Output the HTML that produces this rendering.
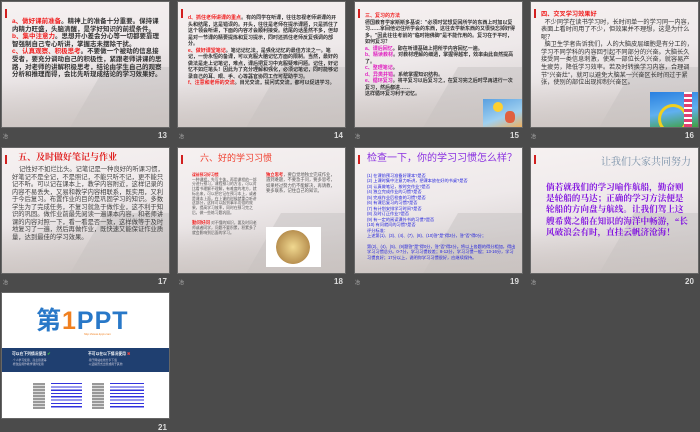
<!DOCTYPE html>
<html><head><meta charset="utf-8"><style>
*{margin:0;padding:0;box-sizing:border-box}
body{width:700px;height:431px;background:#4b4b4b;position:relative;overflow:hidden;font-family:"Liberation Sans","Noto Sans CJK SC",sans-serif}
.s{position:absolute;width:167px;height:125px;overflow:hidden;background:linear-gradient(170deg,#f6f1f1 0%,#eee9ea 45%,#dcd6d6 75%,#cfc9c8 100%);box-shadow:0 0 0 1px #666}
.s:before{content:"";position:absolute;right:-20px;bottom:-30px;width:110px;height:90px;background:rgba(200,196,196,.55);transform:skewX(-30deg)}
.s:after{content:"";position:absolute;left:0;right:0;bottom:0;height:45px;background:linear-gradient(180deg,rgba(230,225,222,0),rgba(200,192,188,.6))}
.s.w:before,.s.w:after{display:none}
.bar{position:absolute;left:3px;top:7px;width:2px;height:9px;background:#d21f1f;z-index:2}
.t{position:absolute;z-index:3;line-height:1.25;color:#333}
.n{position:absolute;color:#ddd;font-size:8px;font-weight:bold}
.m{position:absolute;color:#bbb;font-size:5px}
.r{color:#f02020;font-weight:bold}
.p{color:#e020c0;font-weight:bold}
.b{color:#2222dd}
</style></head><body>

<!-- 13 -->
<div class="s" style="left:2px;top:2px"><div class="bar"></div>
<div class="t" style="left:10px;top:16px;width:152px;font-size:6.5px;line-height:1.17;font-weight:bold"><span class="r">a、做好课前准备</span>。精神上的准备十分重要。保持课内精力旺盛，头脑清醒，是学好知识的前提条件。<br><span class="r">b、集中注意力</span>。思想开小差会分心等一切都要靠理智强制自己专心听讲，掌握志未摆除干扰。<br><span class="r">c、认真观察、积极思考</span>。不要做一个被动的信息接受者，要充分调动自己的积极性，紧跟老师讲课的思路，对老师的讲解积极思考，结论由学生自己的观察分析和推理而得，会比先听现成结论的学习效果好。</div></div>
<div class="m" style="left:3px;top:133px">冶</div><div class="n" style="left:158px;top:131px">13</div>

<!-- 14 -->
<div class="s" style="left:178px;top:2px"><div class="bar"></div>
<div class="t" style="left:10px;top:13px;width:150px;font-size:5px;line-height:1.3;font-weight:bold"><span class="r">d、抓住老师讲课的重点</span>。有的同学在听课，往往忽视老师讲课的开头和结尾，这是错误的。开头，往往是老师在提示课题，只是抓住了这个领会听讲，下面的内容才会顺利接受。结尾的话虽然不多，但却是对一节课的精要提炼和复习提示，同时还抓住老师反复强调的部分。<br><span class="r">e、做好课堂笔记</span>。笔记记忆法，是强化记忆的最佳方法之一。笔记，一份永恒的备课，可以克服大脑记忆方面的限制。当然，最好的做法是走上记笔记，难点，课后把复习中克服疑难问题。记住，好记忆不如烂笔头！因此为了充分理解和强化，必须记笔记，同时能够记录自己的耳、眼、手、心等器官协同工作可帮助学习。<br><span class="r">f、注意和老师的交流</span>。目光交流，提问式交流，都可以促进学习。</div></div>
<div class="m" style="left:179px;top:133px">冶</div><div class="n" style="left:334px;top:131px">14</div>

<!-- 15 -->
<div class="s" style="left:355px;top:2px"><div class="bar"></div>
<div class="t" style="left:10px;top:11px;width:152px;font-size:5px;line-height:1.3;font-weight:bold"><span class="r">三、复习的方法</span><br>德国教育学家斯斯多基说："必须时常想复回所学的东西上时加以复习……拿回他记住所学会的东西，这往去学新东西的又很快忘掉好得多。"因此往往考前的"临时抱佛脚"是不能作用的。复习在于平时，如何复习？<br><span class="p">a、课后回忆</span>。即在听课基础上把所学内容回忆一遍。<br><span class="p">b、精读教材</span>。对教材理解的细透，掌握得越牢，效率由此自然提高了。<br><span class="p">c、整理笔记</span>。<br><span class="p">d、异类并错</span>。系统掌握知识结构。<br><span class="p">e、循环复习</span>。将平复习以后复习之，在复习完之后时早再进行一次复习，然后都进……<br>这样循环复习利于记忆。</div>
<div style="position:absolute;left:128px;top:97px;width:39px;height:28px;background:linear-gradient(160deg,#5aa0e0,#9fd0f0 60%,#f0b060);z-index:4"><div style="position:absolute;left:10px;top:3px;width:10px;height:10px;background:#ffd030;border-radius:50%"></div><div style="position:absolute;left:22px;top:12px;width:10px;height:12px;background:#e06040;border-radius:40%"></div></div></div>
<div class="m" style="left:355px;top:133px">冶</div><div class="n" style="left:510px;top:131px">15</div>

<!-- 16 -->
<div class="s" style="left:531px;top:2px"><div class="bar"></div>
<div class="t" style="left:10px;top:9px;width:154px;font-size:6.2px;line-height:1.22"><span class="r">四、交叉学习效果好</span><br>&nbsp;&nbsp;不少同学在读书学习时，长时间单一的学习同一内容，表面上看时间用了不少，但效果并不理想，这是为什么呢？<br>&nbsp;&nbsp;脑卫生学者告诉我们，人的大脑皮层细胞是有分工的，学习不同学科的内容回引起不同部分的兴奋。大脑长久接受同一类信息刺激，使某一部位长久兴奋，就容易产生疲劳，降低学习效率。若及时转换学习内容，合理调节"兴奋灶"，就可以避免大脑某一兴奋区长时间过于紧张，使别的部位出现抑制兴奋区。</div>
<div style="position:absolute;left:119px;top:90px;width:48px;height:35px;background:linear-gradient(170deg,#2a80e0,#60b0f0 55%,#40a040);z-index:4"><div style="position:absolute;left:8px;top:12px;width:30px;height:30px;border:3px solid #f0d020;border-radius:50%;border-bottom-color:transparent"></div><div style="position:absolute;left:34px;top:0;width:8px;height:35px;background:repeating-linear-gradient(0deg,#e04070 0 3px,#fff 3px 5px)"></div></div></div>
<div class="m" style="left:531px;top:133px">冶</div><div class="n" style="left:685px;top:131px">16</div>

<!-- 17 -->
<div class="s" style="left:2px;top:148px"><div class="bar"></div>
<div class="t" style="left:16px;top:4px;font-size:9px;font-weight:bold;color:#e02020;font-family:'Liberation Serif','Noto Serif CJK SC',serif">五、及时做好笔记与作业</div>
<div class="t" style="left:10px;top:18px;width:152px;font-size:6.3px;line-height:1.2;color:#444">&nbsp;&nbsp;&nbsp;&nbsp;记性好不如烂比头。记笔记是一种良好的听课习惯，好笔记不是全记，不是照记，不能只听不记，更不能只记不听。可以记在课本上，教学内容附近，这样记录的内容不易丢失，又易和教学内容相联系，既实用，又利于今后复习。布置作业的目的是巩固学习的知识。多数学生为了完成任务，不复习就急于做作业，这不利于知识的巩固。做作业前最先阅读一遍课本内容，和老师讲课的内容对照一下，看一看是否一致，这样做等于及时地复习了一遍，然后再做作业，既快速又能保证作业质量，达到最佳的学习效果。</div></div>
<div class="m" style="left:3px;top:279px">冶</div><div class="n" style="left:158px;top:277px">17</div>

<!-- 18 -->
<div class="s" style="left:178px;top:148px"><div class="bar"></div>
<div class="t" style="left:22px;top:5px;font-size:9px;color:#f04030">六、好的学习习惯</div>
<div class="t" style="left:14px;top:25px;width:68px;font-size:3.8px;color:#555"><span class="r">课前预习好习惯</span><br>一种课程，先写主体，再用课程的一部分进行预习，课程预习的方法，可以对比看书理解不理解，有难度的地方，就标出来，可以把它记在预习本上，或者是课本上面，在上课的时候就重点听讲这部分，这样可以起到事半功倍的效果，提高学习效率，同时在预习完之后，做一些练习题巩固。<br><br><span class="r" style="font-size:4.5px">勤问好问</span> 对不懂的知识，要及时问老师或者同学，问题不要积累，积累多了就会影响到后面的学习。</div>
<div class="t" style="left:88px;top:24px;width:70px;font-size:4.3px;color:#555"><span class="r">独立思考</span>，要自觉地独立完成作业，遇到难题，不要急于问，要多思考，如果经过努力仍不能解决，再请教，要多联系，记住自己的知识。</div>
<div style="position:absolute;left:88px;top:79px;width:55px;height:40px;background:#fff;z-index:4"><div style="position:absolute;left:10px;top:3px;width:34px;height:34px;border-radius:50%;background:radial-gradient(#f0d890,#b89050 70%,#fff 72%)"></div></div></div>
<div class="m" style="left:179px;top:279px">冶</div><div class="n" style="left:334px;top:277px">18</div>

<!-- 19 -->
<div class="s" style="left:355px;top:148px"><div class="bar"></div>
<div class="t" style="left:12px;top:5px;font-size:10px;color:#8a30e0">检查一下，你的学习习惯怎么样？</div>
<div class="t b" style="left:12px;top:25px;width:150px;font-size:4.2px;line-height:1.3">(1) 在课前预习准备好课本?是否<br>(2) 上课时集中注意力听讲，把课本放在好的书桌?是否<br>(3) 认真做笔记，按时交作业?是否<br>(4) 独立完成作业的习惯?是否<br>(5) 完成作业后检查的习惯?是否<br>(6) 有课后复习的习惯?是否<br>(7) 有计划安排学习时间?是否<br>(8) 及时订正作业?是否<br>(9) 有一定的阅读课外书的习惯?是否<br>(10) 有问就问的习惯?是否<br>评分标准：<br>上述第(1)、(3)、(4)、(7)、(8)、(10)答"是"得2分，答"否"得0分；<br><br>第(2)、(4)、(5)、(9)题答"是"得0分，答"否"得2分。将以上各题的得分相加，得出学习习惯总分。0-7分，学习习惯较差；8-12分，学习习惯一般；13-16分，学习习惯良好；17分以上，说明你学习习惯很好，应继续保持。</div></div>
<div class="m" style="left:355px;top:279px">冶</div><div class="n" style="left:510px;top:277px">19</div>

<!-- 20 -->
<div class="s" style="left:531px;top:148px"><div class="bar"></div>
<div class="t" style="left:70px;top:9px;font-size:10px;white-space:nowrap;color:#7890a8;font-family:'Liberation Serif','Noto Serif CJK SC',serif">让我们大家共同努力</div>
<div class="t" style="left:15px;top:34px;width:146px;font-size:8.6px;line-height:1.3;color:#8010e0;font-weight:bold;font-family:'Liberation Serif','Noto Serif CJK SC',serif">倘若就我们的学习喻作航船，勤奋则是轮船的马达；正确的学习方法便是轮船的方向盘与航线。让我们驾上这艘希冀之船在知识的海洋中畅游，“长风破浪会有时，直挂云帆济沧海！</div></div>
<div class="m" style="left:531px;top:279px">冶</div><div class="n" style="left:685px;top:277px">20</div>

<!-- 21 -->
<div class="s w" style="left:2px;top:293px;background:#fff">
<div style="position:absolute;left:34px;top:15px;font-size:25px;line-height:26px;font-weight:bold;color:#2878c8;letter-spacing:1px">第<span style="color:#f08020">1</span>PPT</div>
<div style="position:absolute;left:82px;top:39px;font-size:3px;color:#f08020">http://www.1ppt.com</div>
<div style="position:absolute;left:0;top:55px;width:167px;height:24px;background:#1f3f70;z-index:3">
<div style="position:absolute;left:10px;top:3px;font-size:3.8px;color:#fff;font-weight:bold">可以在下列情况使用 <span style="color:#4c4">✔</span></div>
<div style="position:absolute;left:86px;top:3px;font-size:3.8px;color:#fff;font-weight:bold">不可以在以下情况使用 <span style="color:#e44">✖</span></div>
<div style="position:absolute;left:10px;top:10px;width:70px;font-size:2.8px;color:#ccd;line-height:1.6">·个人学习使用、商业授课等<br>·修改后用作教学课件使用</div>
<div style="position:absolute;left:86px;top:10px;width:75px;font-size:2.8px;color:#ccd;line-height:1.6">·用于网站在线分享下载<br>·以盗版形式出售或用于其他</div></div>
<div style="position:absolute;left:31px;top:90px;width:12px;height:26px;background:repeating-linear-gradient(0deg,#999 0 2px,#ddd 2px 3px);z-index:3"></div>
<div style="position:absolute;left:49px;top:90px;width:31px;height:26px;background:repeating-linear-gradient(180deg,#33d 0 1.2px,#fff 1.2px 3.3px);z-index:3"></div>
<div style="position:absolute;left:90px;top:90px;width:12px;height:26px;background:repeating-linear-gradient(0deg,#999 0 2px,#ddd 2px 3px);z-index:3"></div>
<div style="position:absolute;left:108px;top:90px;width:34px;height:26px;background:repeating-linear-gradient(180deg,#33d 0 1.2px,#fff 1.2px 3.3px);z-index:3"></div>
</div>
<div class="n" style="left:158px;top:423px">21</div>
</body></html>
